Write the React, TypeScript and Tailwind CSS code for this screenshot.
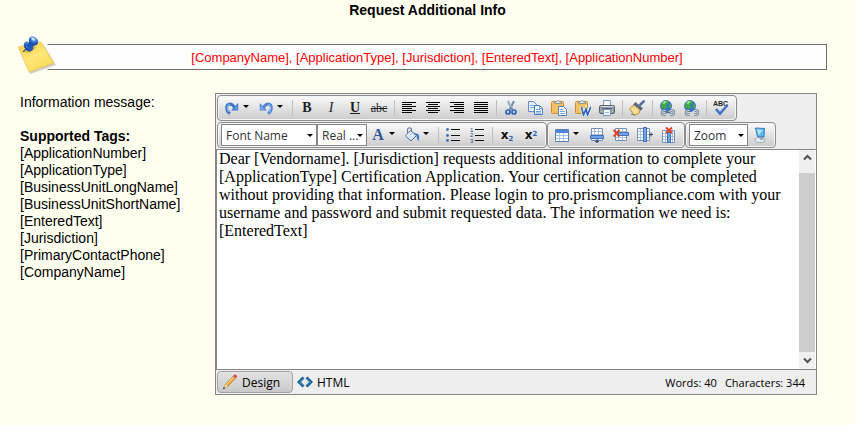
import type { ReactNode } from "react";

const tags = [
  "[ApplicationNumber]",
  "[ApplicationType]",
  "[BusinessUnitLongName]",
  "[BusinessUnitShortName]",
  "[EnteredText]",
  "[Jurisdiction]",
  "[PrimaryContactPhone]",
  "[CompanyName]",
];

const message =
  "Dear [Vendorname]. [Jurisdiction] requests additional information to complete your [ApplicationType] Certification Application. Your certification cannot be completed without providing that information. Please login to pro.prismcompliance.com with your username and password and submit requested data. The information we need is: [EnteredText]";

const Icon = ({ children }: { children: ReactNode }) => (
  <svg width="16" height="16" viewBox="0 0 16 16" fill="none" aria-hidden="true">
    {children}
  </svg>
);

const Caret = () => (
  <svg width="6" height="3" viewBox="0 0 6 3" aria-hidden="true">
    <path d="M0 0h6L3 3z" fill="#000" />
  </svg>
);

const Group = ({ children }: { children: ReactNode }) => (
  <div className="flex h-[26px] items-center rounded border border-[#8c8c8c] bg-linear-to-b from-[#fbfbfb] to-[#cbcbcb] px-[3px] shadow-[inset_0_0_0_1px_#f4f4f4]">
    {children}
  </div>
);

const Separator = () => (
  <span className="flex w-1.5 justify-center">
    <span className="h-4 w-px bg-[#bdbdbd]" />
  </span>
);

const Tool = ({ label, children }: { label: string; children: ReactNode }) => (
  <button
    type="button"
    aria-label={label}
    title={label}
    className="flex h-6 w-6 items-center justify-center"
  >
    {children}
  </button>
);

const SplitTool = ({ label, children }: { label: string; children: ReactNode }) => (
  <button
    type="button"
    aria-label={label}
    title={label}
    className="flex h-6 w-[34px] items-center gap-[3px] pl-[3px]"
  >
    {children}
    <span className="pb-1">
      <Caret />
    </span>
  </button>
);

type PickerProps = { label: string; value: string; width: string };

const Picker = ({ label, value, width }: PickerProps) => (
  <span className={`relative flex h-[22px] ${width}`}>
    <select
      aria-label={label}
      className="h-full w-full appearance-none border border-[#868686] bg-white pl-1 text-[12px] text-[#333]"
    >
      <option>{value}</option>
    </select>
    <span className="pointer-events-none absolute inset-y-0 right-1 flex items-center">
      <Caret />
    </span>
  </span>
);

const Redo = () => (
  <Icon>
    <path d="M6 13.500C1.500 11 1.500 4.500 6 4c2.200 0 3.500 1.500 4.500 4" stroke="#3d74c9" strokeWidth="2.800" />
    <path d="M5 12C2.200 9.500 3 5 6 4.500" stroke="#8db8f0" strokeWidth="1.100" />
    <path d="M14.200 3v7.500H7z" fill="#3d74c9" />
    <path d="M13.200 5.500v4H9.500z" fill="#6c9ee6" />
  </Icon>
);

const Undo = () => (
  <Icon>
    <path d="M10 13.500c4.500-2.500 4.500-9 0-9.500-2.200 0-3.500 1.500-4.500 4" stroke="#4d84d6" strokeWidth="2.800" />
    <path d="M11 12c2.800-2.500 2-7-1-7.500" stroke="#9cc2f4" strokeWidth="1.100" />
    <path d="M1.800 3v7.500H9z" fill="#4d84d6" />
    <path d="M2.800 5.500v4h3.700z" fill="#85b2ef" />
  </Icon>
);

const Align = ({ d }: { d: string }) => (
  <Icon>
    <path d={d} stroke="#000" shapeRendering="crispEdges" />
  </Icon>
);

const Cut = () => (
  <Icon>
    <path d="M5 1l4.500 9M11 1L6.500 10" stroke="#6f8fb0" strokeWidth="2" />
    <path d="M5.500 1l3 6" stroke="#dce8f4" strokeWidth=".8" />
    <circle cx="5" cy="12" r="2" stroke="#2c62bf" strokeWidth="1.700" />
    <circle cx="11" cy="12" r="2" stroke="#2c62bf" strokeWidth="1.700" />
  </Icon>
);

const Copy = () => (
  <Icon>
    <path d="M1.500 1.500h5l3 3v7h-8z" fill="#e7f1fd" stroke="#5d8fd0" />
    <path d="M3 5.500h4M3 7.500h4" stroke="#7fabe2" />
    <path d="M7.500 5.500h5l3 3v6h-8z" fill="#f5faff" stroke="#4179c4" />
    <path d="M12.500 5.500v3h3M9 9.500h4M9 11.500h5M9 13h5" stroke="#6a9ee0" />
  </Icon>
);

const Clipboard = ({ children }: { children: ReactNode }) => (
  <Icon>
    <rect x=".5" y="1.500" width="12" height="12" rx="1" fill="#f4c264" stroke="#c98e2e" />
    <path d="M3.500 3.500V2h2c0-2 3-2 3 0h2v1.500z" fill="#e5e9ee" stroke="#7f8894" strokeWidth=".8" />
    {children}
  </Icon>
);

const Printer = () => (
  <Icon>
    <path d="M4.500.5h7v6h-7z" fill="#f7fbff" stroke="#7998bd" />
    <rect x=".5" y="5.500" width="15" height="8" rx="1.500" fill="#98a0aa" stroke="#59636f" />
    <path d="M1.500 6.500h13" stroke="#d4d9df" />
    <path d="M3 8.500h10" stroke="#555f6b" />
    <path d="M4.500 9.500h7v6h-7z" fill="#eef6ff" stroke="#7998bd" />
    <path d="M6 12.500h4" stroke="#8db7e9" />
    <path d="M2 11.500h1M13 11.500h1" stroke="#b7e34f" />
  </Icon>
);

const Brush = () => (
  <Icon>
    <path d="M15.500.5l-5 5" stroke="#54719b" strokeWidth="2.500" />
    <path d="M6.500 2.500l7 6-2 2-7-6z" fill="#546987" stroke="#374b66" strokeWidth=".6" />
    <path d="M5 5l6 5-1 3.500-5 2L.5 8.500z" fill="#f3d384" stroke="#b89545" />
    <path d="M3 8.500l4 5M5.500 7.500l3 5" stroke="#fff1bf" />
    <path d="M2 14.500h4" stroke="#7b8796" />
  </Icon>
);

const Globe = ({ broken = false }: { broken?: boolean }) => (
  <Icon>
    <circle cx="7" cy="6" r="5.500" fill="#3976c8" stroke="#295aa2" strokeWidth=".7" />
    <path d="M3 2.500C5 .5 8 .5 10 1.500L8.500 4 7 5.500l1 2-2.500 2L2 6.500z" fill="#3fae3c" />
    <path d="M9.500 5l2.500-.5v2.500l-2 1z" fill="#46b63d" />
    <path d="M3.500 3c1-1.500 3-2 4-1.500L5 4z" fill="#b8edb0" />
    <path d="M6.500 10.500H5a2 2 0 000 4h2M11.500 10.500H13a2 2 0 010 4h-2" stroke="#5c718e" strokeWidth="2.400" />
    <path d="M6.500 10.500H5a2 2 0 000 4h2M11.500 10.500H13a2 2 0 010 4h-2" stroke="#dce5f0" strokeWidth="1" />
    {!broken && <path d="M6.500 12.500h5" stroke="#5c718e" strokeWidth="1.600" />}
  </Icon>
);

const SpellCheck = () => (
  <Icon>
    <text x="0" y="6" fontFamily="Liberation Sans" fontSize="7" fontWeight="bold" fill="#222">
      ABC
    </text>
    <path d="M3 9l4 4.500L14.500 5" stroke="#3567bd" strokeWidth="2.600" />
    <path d="M4 9.500l3 3L13 6" stroke="#7aa5e9" strokeWidth=".8" />
  </Icon>
);

const Bucket = () => (
  <Icon>
    <path d="M3.500 6.500V3c0-3 4-3 4 0v4" stroke="#687f9e" strokeWidth="1.200" />
    <path d="M6.500 3.500l6 5-5.500 5.500-5.500-5z" fill="#d9e7f7" stroke="#516b91" />
    <path d="M6 5.500L2.500 9" stroke="#fff" />
    <path d="M9 5.500l5 1.500c1.500 1 1.500 4 .5 7-1-.5-1.500-2.500-2-5z" fill="#4379c9" />
  </Icon>
);

const Bullets = () => (
  <Icon>
    <path d="M6 2.500h9M6 8.500h9M6 13.500h9" stroke="#111" shapeRendering="crispEdges" />
    <g fill="#426fb2">
      <circle cx="2.500" cy="2.500" r="1.400" />
      <circle cx="2.500" cy="8.500" r="1.400" />
      <circle cx="2.500" cy="13.500" r="1.400" />
    </g>
  </Icon>
);

const Numbers = () => (
  <Icon>
    <path d="M6 2.500h9M6 8.500h9M6 13.500h9" stroke="#111" shapeRendering="crispEdges" />
    <g fontFamily="Liberation Sans" fontSize="6" fill="#244f99">
      <text x="1" y="5">1</text>
      <text x="1" y="10">2</text>
      <text x="1" y="16">3</text>
    </g>
  </Icon>
);

const Table = () => (
  <Icon>
    <path d="M1.500 2.500h13v12h-13z" fill="#fff" stroke="#5d7fae" />
    <path d="M2 3h12v3H2z" fill="#4c86dc" />
    <path d="M2 8.500h12M2 11.500h12M5.500 6v8M9.500 6v8" stroke="#a6c3e8" />
  </Icon>
);

const Grid = () => (
  <>
    <path d="M2.500 1.500h11v12h-11z" fill="#fff" stroke="#7390b5" />
    <path d="M3 4.500h10M3 7.500h10M3 10.500h10M5.500 2v11M9.500 2v11" stroke="#aec0d8" />
  </>
);

const InsertRow = () => (
  <Icon>
    <Grid />
    <path d="M1.500 8.500h13v3h-13z" fill="#6fa3ec" stroke="#3d71b8" />
    <path d="M8 12v4M6 14.500h4" stroke="#26466f" />
  </Icon>
);

const DeleteRow = () => (
  <Icon>
    <Grid />
    <path d="M5.500 5.500h10v3h-10z" fill="#6fa3ec" stroke="#3d71b8" />
    <path d="M.5 3l6 6.500M6.500 3l-6 6.500" stroke="#e64024" strokeWidth="1.900" />
  </Icon>
);

const InsertColumn = () => (
  <Icon>
    <path d="M.5 1.500h12v12H.5z" fill="#fff" stroke="#7390b5" />
    <path d="M1 4.500h11M1 7.500h11M1 10.500h11M3.500 2v11" stroke="#aec0d8" />
    <path d="M6.500.5h3v14h-3z" fill="#6fa3ec" stroke="#3d71b8" />
    <path d="M12 7.500h4M14 5.500v4" stroke="#26466f" />
  </Icon>
);

const DeleteColumn = () => (
  <Icon>
    <path d="M1.500 3.500h12v12h-12z" fill="#fff" stroke="#7390b5" />
    <path d="M2 6.500h11M2 9.500h11M2 12.500h11M4.500 4v11M11.500 4v11" stroke="#aec0d8" />
    <path d="M6.500 5.500h3v10h-3z" fill="#6fa3ec" stroke="#3d71b8" />
    <path d="M5 .5l6 5.500M11 .5L5 6" stroke="#e64024" strokeWidth="1.900" />
  </Icon>
);

const FullScreen = () => (
  <Icon>
    <ellipse cx="8" cy="13" rx="5" ry="2.500" fill="#e8edf3" stroke="#9aa8b8" />
    <path d="M7 10l4-1 .5 4H8z" fill="#a4afbe" />
    <path d="M3.500 1l9 .5-.5 8.500-6.500-.5z" fill="#5cb9f4" stroke="#397bb9" />
    <path d="M5 2.500l6 .5-4.500 5z" fill="#b6e6ff" />
  </Icon>
);

const Pencil = () => (
  <Icon>
    <path d="M3.500 10.500L11.500 2l2 2L5.500 12.500 2 14z" fill="#f3b63c" stroke="#a06a1a" strokeWidth=".8" />
    <path d="M4.500 10.500l7-7.500" stroke="#ffe28a" strokeWidth="1" />
    <path d="M11 2l1.500-1.500c1.500-.5 3 1 2.500 2.500L13.500 4.500z" fill="#d9534b" />
    <path d="M3.500 10.500l2 2L1.500 14.500z" fill="#f5dfb6" />
    <path d="M2 13l1.200 1.200L.8 15.200z" fill="#222" />
  </Icon>
);

const Code = () => (
  <Icon>
    <path d="M6.500 3.500L2 8l4.500 4.500M9.500 3.500L14 8l-4.500 4.500" stroke="#15588c" strokeWidth="2.800" />
    <path d="M6 4.500L2.500 8 6 11.500M10 4.500L13.500 8 10 11.500" stroke="#4aa9df" strokeWidth="1" />
  </Icon>
);

const StickyNote = () => (
  <svg width="40" height="40" viewBox="0 0 40 40" aria-hidden="true">
    <defs>
      <linearGradient id="paper" x1="0" y1="0" x2="0.600" y2="1">
        <stop offset="0" stopColor="#f6cf45" />
        <stop offset=".55" stopColor="#ffe777" />
        <stop offset="1" stopColor="#f9d85a" />
      </linearGradient>
      <radialGradient id="pin" cx=".4" cy=".3" r=".7">
        <stop offset="0" stopColor="#a9d2ff" />
        <stop offset=".4" stopColor="#3d7edb" />
        <stop offset="1" stopColor="#123c94" />
      </radialGradient>
    </defs>
    <path d="M2 13l24-5 13 21-26 9z" fill="#8d8a72" opacity=".4" />
    <path d="M1 11L24 6l13 21-25 9z" fill="url(#paper)" stroke="#e3b943" strokeWidth=".5" />
    <path d="M7 16l5 1 7-5-3-4z" fill="#8a6d1d" opacity=".4" />
    <path d="M6 16l5-5" stroke="#53627a" strokeWidth="1.500" />
    <ellipse cx="11.500" cy="10.500" rx="5.500" ry="4" transform="rotate(48 11.500 10.500)" fill="url(#pin)" />
    <path d="M9 9l6-5 4 4-6 5z" fill="#2055b3" />
    <ellipse cx="16.500" cy="5" rx="5" ry="4" transform="rotate(40 16.500 5)" fill="url(#pin)" />
    <ellipse cx="16" cy="3" rx="2.200" ry="1.200" transform="rotate(35 16 3)" fill="#d9edff" opacity=".8" />
  </svg>
);

const Toolbar = () => (
  <div className="flex flex-col gap-px p-px font-['Open_Sans','Noto_Sans',sans-serif]">
    <div className="flex">
      <Group>
        <SplitTool label="Redo"><Redo /></SplitTool>
        <SplitTool label="Undo"><Undo /></SplitTool>
        <Separator />
        <div className="flex font-['Liberation_Serif',serif] text-[14px] leading-4 text-[#1b1f24]">
          <Tool label="Bold"><span className="font-bold">B</span></Tool>
          <Tool label="Italic"><span className="italic">I</span></Tool>
          <Tool label="Underline"><span className="font-bold underline">U</span></Tool>
          <Tool label="Strikethrough"><span className="text-[12px] line-through">abc</span></Tool>
        </div>
        <Separator />
        <Tool label="Align left"><Align d="M1 2.500h14M1 4.500h10M1 6.500h14M1 8.500h10M1 10.500h14M1 12.500h10" /></Tool>
        <Tool label="Align center"><Align d="M1 2.500h14M3 4.500h10M1 6.500h14M3 8.500h10M1 10.500h14M3 12.500h10" /></Tool>
        <Tool label="Align right"><Align d="M1 2.500h14M5 4.500h10M1 6.500h14M5 8.500h10M1 10.500h14M5 12.500h10" /></Tool>
        <Tool label="Justify"><Align d="M1 2.500h14M1 4.500h14M1 6.500h14M1 8.500h14M1 10.500h14M1 12.500h14" /></Tool>
        <Separator />
        <Tool label="Cut"><Cut /></Tool>
        <Tool label="Copy"><Copy /></Tool>
        <Tool label="Paste">
          <Clipboard>
            <path d="M7.500 6.500h5l3 3v6h-8z" fill="#f5faff" stroke="#557fb7" />
            <path d="M9 9.500h3M9 11.500h5M9 13.500h5" stroke="#78a4dc" />
          </Clipboard>
        </Tool>
        <Tool label="Paste from Word">
          <Clipboard>
            <path d="M6.500 7l2 8L11 9l1.500 6L16 6.500" stroke="#fff" strokeWidth="3" />
            <path d="M6.500 7l2 8L11 9l1.500 6L16 6.500" stroke="#2f66bd" strokeWidth="1.700" />
          </Clipboard>
        </Tool>
        <Tool label="Print"><Printer /></Tool>
        <Separator />
        <Tool label="Format stripper"><Brush /></Tool>
        <Separator />
        <Tool label="Insert link"><Globe /></Tool>
        <Tool label="Remove link"><Globe broken /></Tool>
        <Separator />
        <Tool label="Spell check"><SpellCheck /></Tool>
      </Group>
    </div>

    <div className="flex">
      <Group>
        <Picker label="Font name" value="Font Name" width="w-[96px]" />
        <Picker label="Font size" value="Real ..." width="w-[50px]" />
        <SplitTool label="Text color">
          <span className="w-4 text-center font-['Liberation_Serif',serif] text-[16px] leading-4 font-bold text-[#2f5597]">
            A
          </span>
        </SplitTool>
        <SplitTool label="Fill color"><Bucket /></SplitTool>
        <Separator />
        <Tool label="Bullet list"><Bullets /></Tool>
        <Tool label="Numbered list"><Numbers /></Tool>
        <Separator />
        <div className="flex font-['DejaVu_Sans',sans-serif] text-[12px] leading-4 font-bold text-[#111]">
          <Tool label="Subscript">
            <span>x<sub className="text-[7px] text-[#2f5fae]">2</sub></span>
          </Tool>
          <Tool label="Superscript">
            <span>x<sup className="text-[7px] text-[#2f5fae]">2</sup></span>
          </Tool>
        </div>
      </Group>
      <Group>
        <SplitTool label="Insert table"><Table /></SplitTool>
        <Tool label="Insert row"><InsertRow /></Tool>
        <Tool label="Delete row"><DeleteRow /></Tool>
        <Tool label="Insert column"><InsertColumn /></Tool>
        <Tool label="Delete column"><DeleteColumn /></Tool>
      </Group>
      <Group>
        <Picker label="Zoom" value="Zoom" width="w-[59px]" />
        <Tool label="Full screen"><FullScreen /></Tool>
      </Group>
    </div>
  </div>
);

const ScrollArrow = ({ d }: { d: string }) => (
  <svg width="9" height="7" viewBox="0 0 9 7" fill="none" aria-hidden="true">
    <path d={d} stroke="#505050" strokeWidth="2" />
  </svg>
);

const Editor = () => (
  <section className="min-w-0 flex-1 border border-[#868686] bg-[#eee]">
    <Toolbar />

    <div className="flex h-[221px] border-y border-l border-[#868686] bg-white">
      <textarea
        id="message"
        defaultValue={message}
        spellCheck={false}
        className="min-w-0 flex-1 resize-none overflow-hidden bg-white pl-0.5 font-['Liberation_Serif',serif] text-[16px] leading-[18px] text-black outline-none"
      />
      <div className="mr-px flex w-4 flex-col items-center bg-[#f0f0f0]">
        <span className="flex h-[23px] items-start pt-1"><ScrollArrow d="M1 5.500L4.500 2 8 5.500" /></span>
        <span className="w-full flex-1 bg-[#cdcdcd]" />
        <span className="flex h-[17px] items-center"><ScrollArrow d="M1 1.500L4.500 5 8 1.500" /></span>
      </div>
    </div>

    <footer className="flex h-6 items-center px-px font-['Open_Sans','Noto_Sans',sans-serif] text-[12px] text-black">
      <button
        type="button"
        className="flex h-[22px] w-[76px] items-center gap-1 rounded-sm border border-[#a2a2a2] bg-linear-to-b from-[#e2e2e2] to-[#c9c9c9] pl-1"
      >
        <Pencil />
        Design
      </button>
      <button type="button" className="flex h-[22px] items-center gap-1 pl-1">
        <Code />
        HTML
      </button>
      <p className="ml-auto flex gap-2 pr-2.5 text-[11px]">
        <span>Words: 40</span>
        <span>Characters: 344</span>
      </p>
    </footer>
  </section>
);

const App = () => {
  return (
    <main className="min-h-screen bg-[#fffff0] pb-7 font-['Liberation_Sans',Arial,sans-serif] text-[14px] leading-[17px] text-black">
      <h1 className="text-center leading-5 font-bold">Request Additional Info</h1>

      <div className="relative mt-6 mr-7 ml-[47px] h-[26px] border border-[#6e6e6e] border-l-transparent bg-[#fefeff] text-center text-[13px] leading-[26px] text-[#f00]">
        <span className="absolute -top-[9px] -left-[31px]">
          <StickyNote />
        </span>
        [CompanyName], [ApplicationType], [Jurisdiction], [EnteredText], [ApplicationNumber]
      </div>

      <div className="mt-[23px] flex pr-[38px] pl-5">
        <div className="w-[195px] shrink-0 pt-px">
          <label htmlFor="message">Information message:</label>
          <h2 className="mt-[17px] font-bold">Supported Tags:</h2>
          <ul>
            {tags.map((tag) => (
              <li key={tag}>{tag}</li>
            ))}
          </ul>
        </div>
        <Editor />
      </div>
    </main>
  );
};

export default App;
